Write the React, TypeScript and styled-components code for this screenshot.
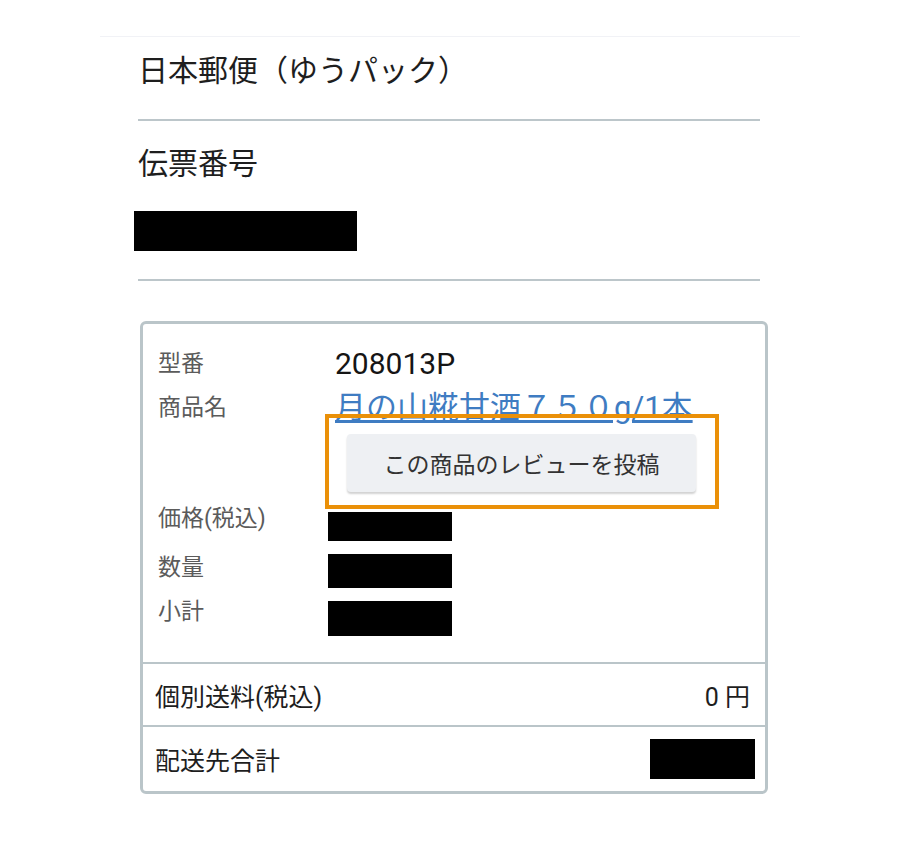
import { createGlobalStyle } from 'styled-components'
import styled from 'styled-components'

const GlobalStyle = createGlobalStyle`
  body {
    margin: 0;
    background: #ffffff;
    font-family: Roboto, "Noto Sans CJK JP", "Noto Sans", sans-serif;
    color: #222222;
  }
`

type DetailRow = {
  label: string
  mt: number
  redacted?: { w: number; h: number; mt: number }
}

const amountRows: DetailRow[] = [
  { label: '価格(税込)', mt: 9, redacted: { w: 124, h: 29, mt: 11 } },
  { label: '数量', mt: 9, redacted: { w: 124, h: 34, mt: 4 } },
  { label: '小計', mt: 6, redacted: { w: 124, h: 35, mt: 7 } }
]

export default function App() {
  return (
    <>
      <GlobalStyle />
      <Page>
        <Inner>
          <Carrier>日本郵便（ゆうパック）</Carrier>
          <Divider $mt={28} />
          <SectionTitle>伝票番号</SectionTitle>
          <Redacted $w={223} $h={40} $mt={27} $ml={-4} />
          <Divider $mt={28} />

          <Card>
            <Details>
              <Row $mt={0}>
                <Label>型番</Label>
                <Value>208013P</Value>
              </Row>
              <Row $mt={8}>
                <Label>商品名</Label>
                <ProductLink href="#">月の山糀甘酒７５０g/1本</ProductLink>
              </Row>
              <ReviewButton type="button">この商品のレビューを投稿</ReviewButton>
              {amountRows.map(row => (
                <Row key={row.label} $mt={row.mt}>
                  <Label>{row.label}</Label>
                  {row.redacted && <Redacted $w={row.redacted.w} $h={row.redacted.h} $mt={row.redacted.mt} $ml={0} />}
                </Row>
              ))}
            </Details>
            <SummaryRow>
              <SummaryLabel>個別送料(税込)</SummaryLabel>
              <SummaryValue>0 円</SummaryValue>
            </SummaryRow>
            <SummaryRow $tight>
              <SummaryLabel>配送先合計</SummaryLabel>
              <Redacted $w={105} $h={40} $mt={0} $ml={0} />
            </SummaryRow>
            <Highlight />
          </Card>
        </Inner>
      </Page>
    </>
  )
}

const Page = styled.div`
  width: 700px;
  margin: 36px 0 0 100px;
  border-top: 1px solid #f1f2f6;
  padding-bottom: 40px;
`

const Inner = styled.div`
  padding: 0 40px 0 38px;
  display: flex;
  flex-direction: column;
`

const Carrier = styled.h1`
  margin: 14px 0 0 0;
  font-size: 30px;
  line-height: 40px;
  font-weight: normal;
  color: #1e1e1e;
`

const SectionTitle = styled.h2`
  margin: 23px 0 0 0;
  font-size: 30px;
  line-height: 40px;
  font-weight: normal;
  color: #1e1e1e;
`

const Divider = styled.hr<{ $mt: number }>`
  margin: ${p => p.$mt}px 0 0 0;
  border: none;
  height: 2px;
  background: #bcc6ca;
`

const Redacted = styled.div<{ $w: number; $h: number; $mt: number; $ml: number }>`
  width: ${p => p.$w}px;
  height: ${p => p.$h}px;
  margin-top: ${p => p.$mt}px;
  margin-left: ${p => p.$ml}px;
  background: #000000;
  flex-shrink: 0;
`

const Card = styled.div`
  position: relative;
  box-sizing: border-box;
  width: 628px;
  margin: 40px 0 0 2px;
  border: 3px solid #bac5c9;
  border-radius: 6px;
  display: flex;
  flex-direction: column;
`

const Details = styled.div`
  display: flex;
  flex-direction: column;
  padding: 22px 15px 26px 15px;
`

const Row = styled.div<{ $mt: number }>`
  display: grid;
  grid-template-columns: 170px 1fr;
  align-items: start;
  margin-top: ${p => p.$mt}px;
`

const Label = styled.span`
  font-size: 23px;
  line-height: 36px;
  color: #5b5b5b;
`

const Value = styled.span`
  font-size: 30px;
  line-height: 36px;
  color: #151515;
  padding-left: 7px;
`

const ProductLink = styled.a`
  font-size: 31px;
  line-height: 36px;
  color: #3f7cc2;
  text-decoration: underline;
  text-underline-offset: 2px;
  padding-left: 7px;
  white-space: nowrap;
`

const ReviewButton = styled.button`
  margin: 8px 0 0 189px;
  width: 349px;
  height: 58px;
  border: none;
  border-radius: 4px;
  background: #eef0f3;
  box-shadow: 0 2px 2px rgba(0, 0, 0, 0.18);
  font-family: inherit;
  font-size: 23px;
  color: #333333;
  cursor: pointer;
`

const SummaryRow = styled.div<{ $tight?: boolean }>`
  display: flex;
  align-items: center;
  justify-content: space-between;
  height: ${p => (p.$tight ? 64 : 61)}px;
  padding: 0 ${p => (p.$tight ? 10 : 15)}px 0 12px;
  border-top: 2px solid #bac5c9;
`

const SummaryLabel = styled.span`
  font-size: 25px;
  color: #1e1e1e;
`

const SummaryValue = styled.span`
  font-size: 25px;
  color: #1e1e1e;
`

const Highlight = styled.div`
  position: absolute;
  left: 182px;
  top: 90px;
  width: 394px;
  height: 95px;
  box-sizing: border-box;
  border: 4px solid #ea9008;
  pointer-events: none;
`
